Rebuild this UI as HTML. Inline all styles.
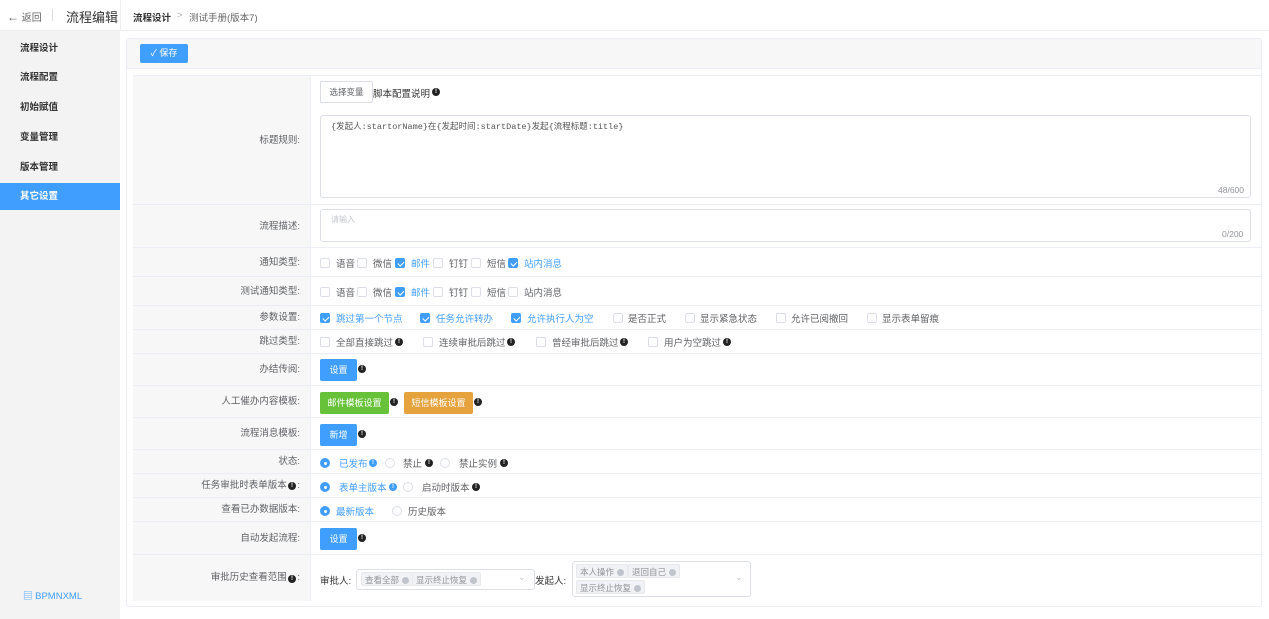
<!DOCTYPE html>
<html><head><meta charset="utf-8"><style>
*{box-sizing:border-box;margin:0;padding:0}
body{width:1269px;height:619px;position:relative;background:#fff;font-family:"Liberation Sans","Noto Sans CJK SC",sans-serif;font-size:9.5px;color:#606266;overflow:hidden}
.a{position:absolute;white-space:nowrap}
.side{left:0;top:31px;width:120px;height:588px;background:#f3f3f3}
.mi{left:0;width:120px;height:27px;line-height:27px;padding-left:20px;font-size:9.5px;color:#333;font-weight:bold}
.lab{left:133px;width:177px;background:#f7f7f7;border-bottom:1px solid #ebeef5;text-align:right;padding-right:10px;color:#606266}
.val{left:310px;width:951px;border-bottom:1px solid #ebeef5;border-left:1px solid #ebeef5}
.cb{width:10px;height:10px;border:1px solid #dcdfe6;border-radius:2px;background:#fff}
.cb.on{background:#409eff;border-color:#409eff}
.cb.on:after{content:"";position:absolute;left:3px;top:0.5px;width:2.5px;height:5px;border:solid #fff;border-width:0 1.2px 1.2px 0;transform:rotate(45deg)}
.rd{width:10px;height:10px;border:1px solid #dcdfe6;border-radius:50%;background:#fff}
.rd.on{background:#409eff;border-color:#409eff}
.rd.on:after{content:"";position:absolute;left:3px;top:3px;width:3px;height:3px;border-radius:50%;background:#fff}
.blue{color:#409eff}
.ic{width:8px;height:8px;border-radius:50%;background:#222;color:#fff;font-size:6px;line-height:8px;text-align:center;font-weight:bold}
.ic.b{background:#409eff}
.btn{height:22px;line-height:22px;color:#fff;background:#409eff;border-radius:2px;text-align:center;font-size:9px}
.tag{height:14px;line-height:14px;background:#f0f2f5;border:1px solid #e9e9eb;color:#909399;font-size:8.5px;padding:0 3px;border-radius:2px}
.tag i{display:inline-block;width:7px;height:7px;border-radius:50%;background:#c0c4cc;margin-left:3px;vertical-align:-1px}
</style></head><body>
<div class="a" style="left:0;top:30px;width:1269px;height:1px;background:#eee"></div>
<div class="a" style="left:7px;top:9px;font-size:10px;color:#666"><span style="font-size:12px">&#8592;</span> 返回</div>
<div class="a" style="left:52px;top:9px;width:1px;height:12px;background:#ddd"></div>
<div class="a" style="left:66px;top:7px;font-size:13px;color:#333">流程编辑</div>
<div class="a" style="left:120px;top:0;width:1px;height:31px;background:#eee"></div>
<div class="a" style="left:133px;top:10px;font-weight:bold;color:#333">流程设计</div>
<div class="a" style="left:177px;top:10px;color:#aaa">&gt;</div>
<div class="a" style="left:189px;top:10px;color:#666">测试手册(版本7)</div>
<div class="a side"></div>
<div class="a mi" style="top:35px">流程设计</div>
<div class="a mi" style="top:64px">流程配置</div>
<div class="a mi" style="top:94px">初始赋值</div>
<div class="a mi" style="top:124px">变量管理</div>
<div class="a mi" style="top:154px">版本管理</div>
<div class="a mi" style="top:183px;background:#409eff;color:#fff">其它设置</div>
<div class="a blue" style="left:23px;top:588px;font-size:9.5px">&#9636; BPMNXML</div>
<div class="a" style="left:126px;top:38px;width:1136px;height:569px;border:1px solid #ebeef5;border-radius:3px"></div>
<div class="a" style="left:127px;top:39px;width:1134px;height:30px;background:#f7f7f7;border-bottom:1px solid #ebeef5"></div>
<div class="a btn" style="left:140px;top:44px;width:48px;height:19px;line-height:19px">✓ 保存</div>
<div class="a" style="left:133px;top:75px;width:1128px;height:1px;background:#ebeef5"></div>

<div class="a lab" style="top:76px;height:129px;line-height:129px">标题规则:</div><div class="a val" style="top:76px;height:129px"></div>
<div class="a" style="left:320px;top:81px;width:53px;height:22px;border:1px solid #dcdfe6;border-radius:2px;font-size:8.5px;text-align:center;line-height:20px;background:#fff">选择变量</div>
<div class="a" style="left:373px;top:86px;color:#333">脚本配置说明</div><div class="a ic" style="left:432px;top:88px">!</div>
<div class="a" style="left:320px;top:115px;width:931px;height:83px;border:1px solid #dcdfe6;border-radius:3px"></div>
<div class="a" style="left:331px;top:120px;font-family:'Liberation Mono','Noto Sans CJK SC',monospace;font-size:8.5px;color:#555">{发起人:startorName}在{发起时间:startDate}发起{流程标题:title}</div>
<div class="a" style="left:1218px;top:185px;font-size:8.5px;color:#909399">48/600</div>

<div class="a lab" style="top:205px;height:43px;line-height:43px">流程描述:</div><div class="a val" style="top:205px;height:43px"></div>
<div class="a" style="left:320px;top:209px;width:931px;height:33px;border:1px solid #dcdfe6;border-radius:3px"></div>
<div class="a" style="left:331px;top:214px;font-size:8px;color:#c0c4cc">请输入</div>
<div class="a" style="left:1222px;top:229px;font-size:8.5px;color:#909399">0/200</div>

<div class="a lab" style="top:248px;height:29px;line-height:29px">通知类型:</div><div class="a val" style="top:248px;height:29px"></div>
<div class="a cb" style="left:320px;top:258px"></div><div class="a" style="left:336px;top:256px">语音</div>
<div class="a cb" style="left:357px;top:258px"></div><div class="a" style="left:373px;top:256px">微信</div>
<div class="a cb on" style="left:395px;top:258px"></div><div class="a blue" style="left:411px;top:256px">邮件</div>
<div class="a cb" style="left:433px;top:258px"></div><div class="a" style="left:449px;top:256px">钉钉</div>
<div class="a cb" style="left:471px;top:258px"></div><div class="a" style="left:487px;top:256px">短信</div>
<div class="a cb on" style="left:508px;top:258px"></div><div class="a blue" style="left:524px;top:256px">站内消息</div>

<div class="a lab" style="top:277px;height:29px;line-height:29px">测试通知类型:</div><div class="a val" style="top:277px;height:29px"></div>
<div class="a cb" style="left:320px;top:287px"></div><div class="a" style="left:336px;top:285px">语音</div>
<div class="a cb" style="left:357px;top:287px"></div><div class="a" style="left:373px;top:285px">微信</div>
<div class="a cb on" style="left:395px;top:287px"></div><div class="a blue" style="left:411px;top:285px">邮件</div>
<div class="a cb" style="left:433px;top:287px"></div><div class="a" style="left:449px;top:285px">钉钉</div>
<div class="a cb" style="left:471px;top:287px"></div><div class="a" style="left:487px;top:285px">短信</div>
<div class="a cb" style="left:508px;top:287px"></div><div class="a" style="left:524px;top:285px">站内消息</div>

<div class="a lab" style="top:306px;height:24px;line-height:24px">参数设置:</div><div class="a val" style="top:306px;height:24px"></div>
<div class="a cb on" style="left:320px;top:313px"></div><div class="a blue" style="left:336px;top:311px">跳过第一个节点</div>
<div class="a cb on" style="left:420px;top:313px"></div><div class="a blue" style="left:436px;top:311px">任务允许转办</div>
<div class="a cb on" style="left:511px;top:313px"></div><div class="a blue" style="left:527px;top:311px">允许执行人为空</div>
<div class="a cb" style="left:613px;top:313px"></div><div class="a" style="left:628px;top:311px">是否正式</div>
<div class="a cb" style="left:685px;top:313px"></div><div class="a" style="left:700px;top:311px">显示紧急状态</div>
<div class="a cb" style="left:776px;top:313px"></div><div class="a" style="left:791px;top:311px">允许已阅撤回</div>
<div class="a cb" style="left:867px;top:313px"></div><div class="a" style="left:882px;top:311px">显示表单留痕</div>

<div class="a lab" style="top:330px;height:24px;line-height:24px">跳过类型:</div><div class="a val" style="top:330px;height:24px"></div>
<div class="a cb" style="left:320px;top:337px"></div><div class="a" style="left:336px;top:335px">全部直接跳过</div><div class="a ic" style="left:395px;top:338px">!</div>
<div class="a cb" style="left:423px;top:337px"></div><div class="a" style="left:439px;top:335px">连续审批后跳过</div><div class="a ic" style="left:507px;top:338px">!</div>
<div class="a cb" style="left:536px;top:337px"></div><div class="a" style="left:552px;top:335px">曾经审批后跳过</div><div class="a ic" style="left:620px;top:338px">!</div>
<div class="a cb" style="left:648px;top:337px"></div><div class="a" style="left:664px;top:335px">用户为空跳过</div><div class="a ic" style="left:723px;top:338px">!</div>

<div class="a lab" style="top:354px;height:32px;line-height:32px">办结传阅:</div><div class="a val" style="top:354px;height:32px"></div>
<div class="a btn" style="left:320px;top:359px;width:37px">设置</div><div class="a ic" style="left:358px;top:365px">!</div>

<div class="a lab" style="top:386px;height:32px;line-height:32px">人工催办内容模板:</div><div class="a val" style="top:386px;height:32px"></div>
<div class="a btn" style="left:320px;top:392px;width:69px;background:#67c23a">邮件模板设置</div><div class="a ic" style="left:390px;top:398px">!</div>
<div class="a btn" style="left:404px;top:392px;width:69px;background:#e6a23c">短信模板设置</div><div class="a ic" style="left:474px;top:398px">!</div>

<div class="a lab" style="top:418px;height:32px;line-height:32px">流程消息模板:</div><div class="a val" style="top:418px;height:32px"></div>
<div class="a btn" style="left:320px;top:424px;width:37px">新增</div><div class="a ic" style="left:358px;top:430px">!</div>

<div class="a lab" style="top:450px;height:24px;line-height:24px">状态:</div><div class="a val" style="top:450px;height:24px"></div>
<div class="a rd on" style="left:320px;top:458px"></div><div class="a blue" style="left:339px;top:456px">已发布</div><div class="a ic b" style="left:369px;top:459px">!</div>
<div class="a rd" style="left:385px;top:458px"></div><div class="a" style="left:403px;top:456px">禁止</div><div class="a ic" style="left:425px;top:459px">!</div>
<div class="a rd" style="left:440px;top:458px"></div><div class="a" style="left:459px;top:456px">禁止实例</div><div class="a ic" style="left:500px;top:459px">!</div>

<div class="a lab" style="top:474px;height:24px;line-height:24px">任务审批时表单版本 &nbsp;&nbsp;&nbsp;:</div><div class="a ic" style="left:288px;top:482px">!</div><div class="a val" style="top:474px;height:24px"></div>
<div class="a rd on" style="left:320px;top:482px"></div><div class="a blue" style="left:339px;top:480px">表单主版本</div><div class="a ic b" style="left:389px;top:483px">!</div>
<div class="a rd" style="left:403px;top:482px"></div><div class="a" style="left:422px;top:480px">启动时版本</div><div class="a ic" style="left:472px;top:483px">!</div>

<div class="a lab" style="top:498px;height:24px;line-height:24px">查看已办数据版本:</div><div class="a val" style="top:498px;height:24px"></div>
<div class="a rd on" style="left:320px;top:506px"></div><div class="a blue" style="left:336px;top:504px">最新版本</div>
<div class="a rd" style="left:392px;top:506px"></div><div class="a" style="left:408px;top:504px">历史版本</div>

<div class="a lab" style="top:522px;height:33px;line-height:33px">自动发起流程:</div><div class="a val" style="top:522px;height:33px"></div>
<div class="a btn" style="left:320px;top:528px;width:37px">设置</div><div class="a ic" style="left:358px;top:534px">!</div>

<div class="a lab" style="top:555px;height:46px;line-height:46px;border-bottom:none">审批历史查看范围 &nbsp;&nbsp;&nbsp;:</div><div class="a ic" style="left:288px;top:575px">!</div><div class="a val" style="top:555px;height:46px;border-bottom:none"></div>
<div class="a" style="left:320px;top:573px;color:#333">审批人:</div>
<div class="a" style="left:356px;top:569px;width:179px;height:21px;border:1px solid #dcdfe6;border-radius:3px;background:#fff"></div>
<div class="a tag" style="left:361px;top:572px">查看全部<i></i></div>
<div class="a tag" style="left:412px;top:572px">显示终止恢复<i></i></div>
<div class="a" style="left:518px;top:572px;color:#c0c4cc;font-size:9px">&#8964;</div>
<div class="a" style="left:535px;top:573px;color:#333">发起人:</div>
<div class="a" style="left:572px;top:561px;width:179px;height:36px;border:1px solid #dcdfe6;border-radius:3px;background:#fff"></div>
<div class="a tag" style="left:576px;top:564px">本人操作<i></i></div>
<div class="a tag" style="left:628px;top:564px">退回自己<i></i></div>
<div class="a tag" style="left:576px;top:580px">显示终止恢复<i></i></div>
<div class="a" style="left:735px;top:572px;color:#c0c4cc;font-size:9px">&#8964;</div>
</body></html>
